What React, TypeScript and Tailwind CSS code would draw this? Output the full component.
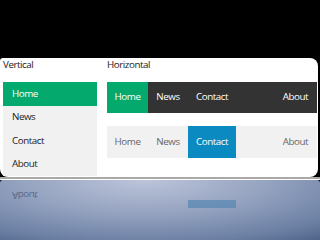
import React from 'react';

const font = { fontFamily: '"Open Sans", "Noto Sans", sans-serif' };

const verticalItems = ['Home', 'News', 'Contact', 'About'];

const App: React.FC = () => {
  return (
    <div className="w-[320px] h-[240px] bg-black flex flex-col overflow-hidden text-[9.8px] tracking-[-0.45px]" style={font}>
      <div className="h-[58px] shrink-0" />

      {/* white panel */}
      <div className="h-[119px] shrink-0 bg-white rounded-tl-[3px] rounded-tr-[8px] rounded-b-[8px] mr-[2px] flex">
        <div className="w-[98px] shrink-0 flex flex-col">
          <div className="h-[24px] pl-[3px] text-[#222] leading-[14px]">Vertical</div>
          <div className="ml-[3px] w-[94px] bg-[#f1f1f1] flex flex-col h-[94px]">
            {verticalItems.map((item, i) => (
              <div
                key={item}
                className={`pl-[9px] flex items-center ${i === 0 ? 'bg-[#04aa6d] text-white h-[24px]' : 'text-[#222] h-[23.3px]'}`}
              >
                {item}
              </div>
            ))}
          </div>
        </div>

        <div className="flex-1 pl-[9px] flex flex-col">
          <div className="h-[24px] text-[#222] leading-[14px]">Horizontal</div>
          <div className="h-[31px] w-[210px] bg-[#333333] flex text-white">
            <div className="w-[41px] bg-[#04aa6d] flex items-center justify-center">Home</div>
            <div className="w-[40px] flex items-center justify-center">News</div>
            <div className="w-[48px] flex items-center justify-center">Contact</div>
            <div className="ml-auto pr-[9px] flex items-center">About</div>
          </div>
          <div className="h-[13px]" />
          <div className="h-[32px] w-[210px] bg-[#f1f1f1] flex text-[#666]">
            <div className="w-[41px] flex items-center justify-center">Home</div>
            <div className="w-[40px] flex items-center justify-center">News</div>
            <div className="w-[48px] bg-[#0a8ac0] text-white flex items-center justify-center">Contact</div>
            <div className="ml-auto pr-[9px] flex items-center">About</div>
          </div>
        </div>
      </div>

      <div className="h-[2px] shrink-0 bg-[#a8a8a8]" />
      <div className="h-px shrink-0 bg-white" />

      {/* reflection floor */}
      <div className="flex-1 relative rounded-t-[3px] bg-[radial-gradient(ellipse_110%_160%_at_45%_0%,#bcc4da_0%,#95a3c0_35%,#6c80a4_65%,#2a3f66_100%)]">
        <div className="absolute left-[12px] top-[10px] -scale-y-100 text-[#3d4b6a] opacity-70 leading-[10px]">About</div>
        <div className="absolute left-[188px] top-[20px] w-[48px] h-[8px] bg-[#5f89b4] opacity-80" />
      </div>
    </div>
  );
};

export default App;
